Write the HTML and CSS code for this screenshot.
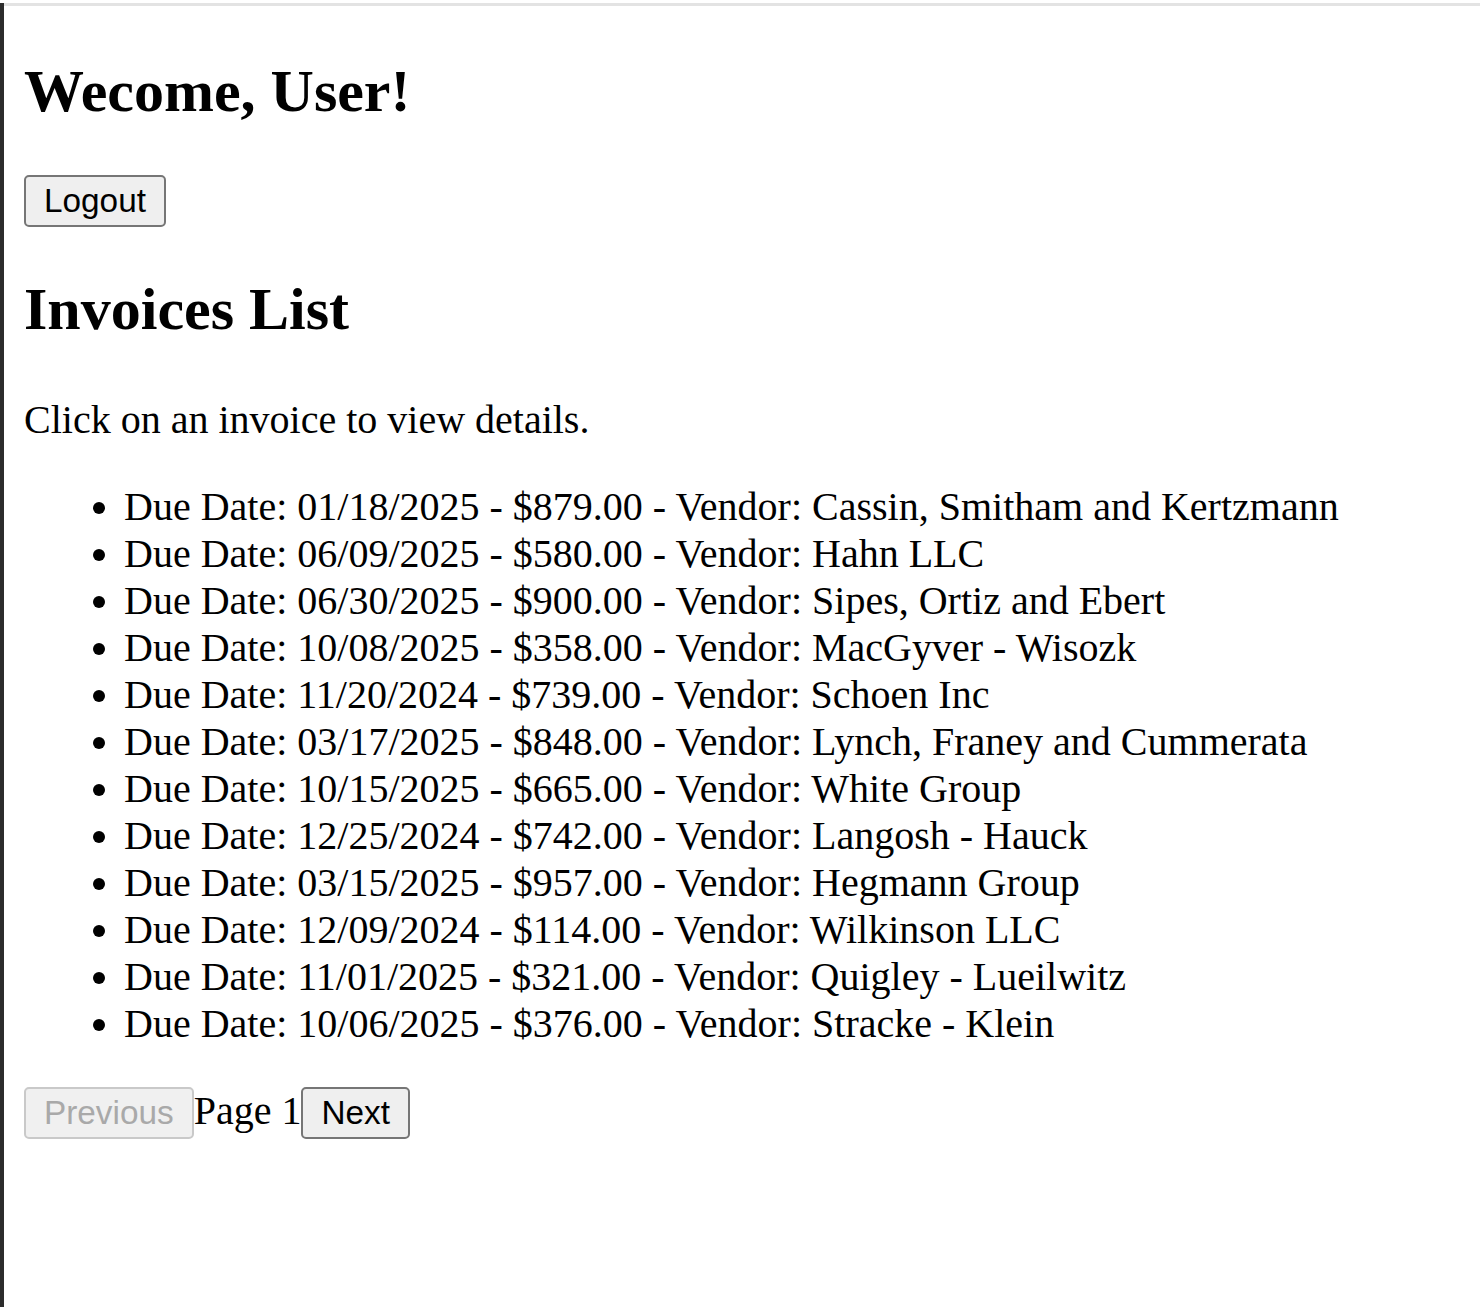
FILE: index.html
```html
<!DOCTYPE html>
<html lang="en">
<head>
<meta charset="utf-8">
<title>Invoices</title>
<link rel="stylesheet" href="styles.css">
</head>
<body>
<div class="frame">
  <div class="topline"></div>
  <div class="content">
    <h1 class="title">Wecome, User!</h1>
    <div class="logout-row"><button class="btn">Logout</button></div>
    <h2 class="subtitle">Invoices List</h2>
    <p class="hint">Click on an invoice to view details.</p>
    <ul class="invoices">
      <li>Due Date: 01/18/2025 - $879.00 - Vendor: Cassin, Smitham and Kertzmann</li>
      <li>Due Date: 06/09/2025 - $580.00 - Vendor: Hahn LLC</li>
      <li>Due Date: 06/30/2025 - $900.00 - Vendor: Sipes, Ortiz and Ebert</li>
      <li>Due Date: 10/08/2025 - $358.00 - Vendor: MacGyver - Wisozk</li>
      <li>Due Date: 11/20/2024 - $739.00 - Vendor: Schoen Inc</li>
      <li>Due Date: 03/17/2025 - $848.00 - Vendor: Lynch, Franey and Cummerata</li>
      <li>Due Date: 10/15/2025 - $665.00 - Vendor: White Group</li>
      <li>Due Date: 12/25/2024 - $742.00 - Vendor: Langosh - Hauck</li>
      <li>Due Date: 03/15/2025 - $957.00 - Vendor: Hegmann Group</li>
      <li>Due Date: 12/09/2024 - $114.00 - Vendor: Wilkinson LLC</li>
      <li>Due Date: 11/01/2025 - $321.00 - Vendor: Quigley - Lueilwitz</li>
      <li>Due Date: 10/06/2025 - $376.00 - Vendor: Stracke - Klein</li>
    </ul>
    <div class="pager"><button class="btn" disabled>Previous</button><span class="page-label">Page 1</span><button class="btn">Next</button></div>
  </div>
</div>
</body>
</html>
```

FILE: styles.css
```css
html, body {
  margin: 0;
  padding: 0;
  background: #ffffff;
}

body {
  font-family: "Liberation Serif", "Times New Roman", serif;
  font-size: 40px;
  line-height: 47px;
  color: #000000;
}

.frame {
  border-left: 4px solid #2c2c2c;
  min-height: 1307px;
  box-sizing: border-box;
}

.topline {
  margin-top: 3px;
  height: 3px;
  background: #e3e3e3;
}

.content {
  padding: 0 20px;
}

.title {
  font-size: 60px;
  line-height: 69px;
  font-weight: bold;
  margin: 51px 0 49px;
}

.logout-row {
  display: flex;
}

.btn {
  font-family: "Liberation Sans", Arial, sans-serif;
  font-size: 33.33px;
  line-height: 40px;
  color: #000000;
  background: #efefef;
  border: 2px solid #767676;
  border-radius: 5px;
  padding: 4px 18px;
  margin: 0;
  box-sizing: border-box;
  height: 52px;
}

.btn:disabled {
  color: #a9a9a9;
  border-color: #c9c9c9;
  background: #f0f0f0;
}

.subtitle {
  font-size: 60px;
  line-height: 69px;
  font-weight: bold;
  margin: 48px 0 52px;
}

.hint {
  margin: 0 0 40px;
}

.invoices {
  margin: 0 0 40px;
  padding-left: 100px;
}

.pager {
  display: flex;
  align-items: baseline;
}

.page-label {
  white-space: pre;
}
```
